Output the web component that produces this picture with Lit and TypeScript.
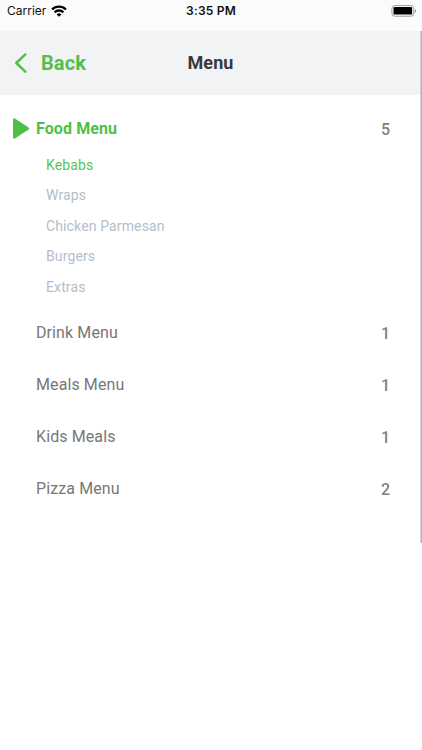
import { LitElement, html, css } from "lit";
import { customElement, property } from "lit/decorators.js";
import { classMap } from "lit/directives/class-map.js";

interface Section {
  name: string;
  count: number;
  items?: string[];
}

const SECTIONS: Section[] = [
  { name: "Food Menu", count: 5, items: ["Kebabs", "Wraps", "Chicken Parmesan", "Burgers", "Extras"] },
  { name: "Drink Menu", count: 1 },
  { name: "Meals Menu", count: 1 },
  { name: "Kids Meals", count: 1 },
  { name: "Pizza Menu", count: 2 },
];

@customElement("status-bar")
class StatusBar extends LitElement {
  static styles = css`
    :host {
      display: grid;
      grid-template-columns: 1fr auto 1fr;
      box-sizing: border-box;
      height: 31px;
      padding: 0 6px 9px 7px;
      align-items: center;
      background: #fbfbfb;
      color: #111;
      font: 12px/22px Inter, sans-serif;
    }
    .carrier { display: flex; align-items: center; gap: 5px; }
    .time { font-weight: 600; letter-spacing: 0.2px; margin-right: 1px; }
    .battery { justify-self: end; display: block; margin-right: -1px; }
    svg { display: block; }
  `;
  render() {
    return html`
      <div class="carrier">
        <span>Carrier</span>
        <svg width="16" height="12" viewBox="0 0 16 12">
          <g fill="none" stroke="#000" stroke-width="2.4">
            <path d="M1.1 4.5a9.8 9.8 0 0 1 13.8 0" />
            <path d="M3.6 7.3a6.2 6.2 0 0 1 8.8 0" />
          </g>
          <path d="M8 11.8 5.6 9.4a3.4 3.4 0 0 1 4.8 0z" />
        </svg>
      </div>
      <span class="time">3:35 PM</span>
      <svg class="battery" width="26" height="12" viewBox="0 0 26 12">
        <rect x="0.9" y="0.6" width="21.8" height="10.6" rx="2.9" fill="#fff" stroke="#999" />
        <rect x="2.5" y="2" width="18.6" height="7.6" rx="1.2" />
        <path d="M23.9 4.2c1.6.6 1.6 2.9 0 3.5z" fill="#888" />
      </svg>
    `;
  }
}

@customElement("nav-header")
class NavHeader extends LitElement {
  static styles = css`
    :host {
      display: grid;
      grid-template-columns: 1fr auto 1fr;
      align-items: center;
      height: 64px;
      padding: 0 15px 0 14px;
      background: #f2f3f5;
    }
    .back { display: flex; align-items: center; gap: 14px; color: #56bf4b; font-size: 20px; font-weight: 700; line-height: 24px; letter-spacing: 0.1px; }
    .title { color: #38393c; font-size: 18px; font-weight: 700; line-height: 24px; letter-spacing: 0.1px; }
    svg { display: block; }
  `;
  render() {
    return html`
      <div class="back">
        <svg width="13" height="22" viewBox="0 0 13 22">
          <path d="M11.3 2.4 2.3 11l9 8.7" fill="none" stroke="currentColor" stroke-width="2.5" stroke-linecap="round" stroke-linejoin="round" />
        </svg>
        <span>Back</span>
      </div>
      <span class="title">Menu</span>
    `;
  }
}

@customElement("menu-section")
class MenuSection extends LitElement {
  @property({ attribute: false }) section!: Section;
  @property() selected = "";

  static styles = css`
    :host { display: block; }
    .row {
      display: grid;
      grid-template-columns: 24px 1fr auto;
      align-items: center;
      height: 52px;
      padding: 0 32px 0 12px;
      color: #777;
      font-size: 16px;
      letter-spacing: 0.1px;
    }
    .open { color: #50bf48; font-weight: 700; height: 50px; }
    .count { color: #7f8184; font-weight: 500; letter-spacing: 0; padding-top: 2px; }
    .items { margin: -3.5px 0 0; padding: 0 0 4.5px 46px; list-style: none; }
    .item { height: 30.6px; line-height: 30.6px; color: #b3bec8; font-size: 14px; letter-spacing: 0.13px; }
    .selected { color: #5ac451; }
    svg { display: block; }
  `;
  render() {
    const { name, count, items } = this.section;
    return html`
      <div class=${classMap({ row: true, open: !!items })}>
        <span>${items
          ? html`<svg width="18" height="22" viewBox="0 0 18 22">
              <path d="M2.2 2.4v18L16 11.4z" fill="currentColor" stroke="currentColor" stroke-width="2.4" stroke-linejoin="round" />
            </svg>`
          : ""}</span>
        <span>${name}</span>
        <span class="count">${count}</span>
      </div>
      ${items
        ? html`<ul class="items">
            ${items.map((i) => html`<li class=${classMap({ item: true, selected: i === this.selected })}>${i}</li>`)}
          </ul>`
        : ""}
    `;
  }
}

@customElement("app-root")
class AppRoot extends LitElement {
  static styles = css`
    :host {
      display: block;
      position: relative;
      height: 750px;
      overflow: hidden;
      background: #fff;
      font-family: Roboto, sans-serif;
    }
    .list { padding-top: 8px; }
    .scrollbar { position: absolute; top: 31px; right: 0; width: 2px; height: 512px; background: linear-gradient(90deg, #d0d5da 50%, #adb3b9 50%); }
  `;
  render() {
    return html`
      <status-bar></status-bar>
      <nav-header></nav-header>
      <div class="list">
        ${SECTIONS.map((s) => html`<menu-section .section=${s} selected="Kebabs"></menu-section>`)}
      </div>
      <div class="scrollbar"></div>
    `;
  }
}
